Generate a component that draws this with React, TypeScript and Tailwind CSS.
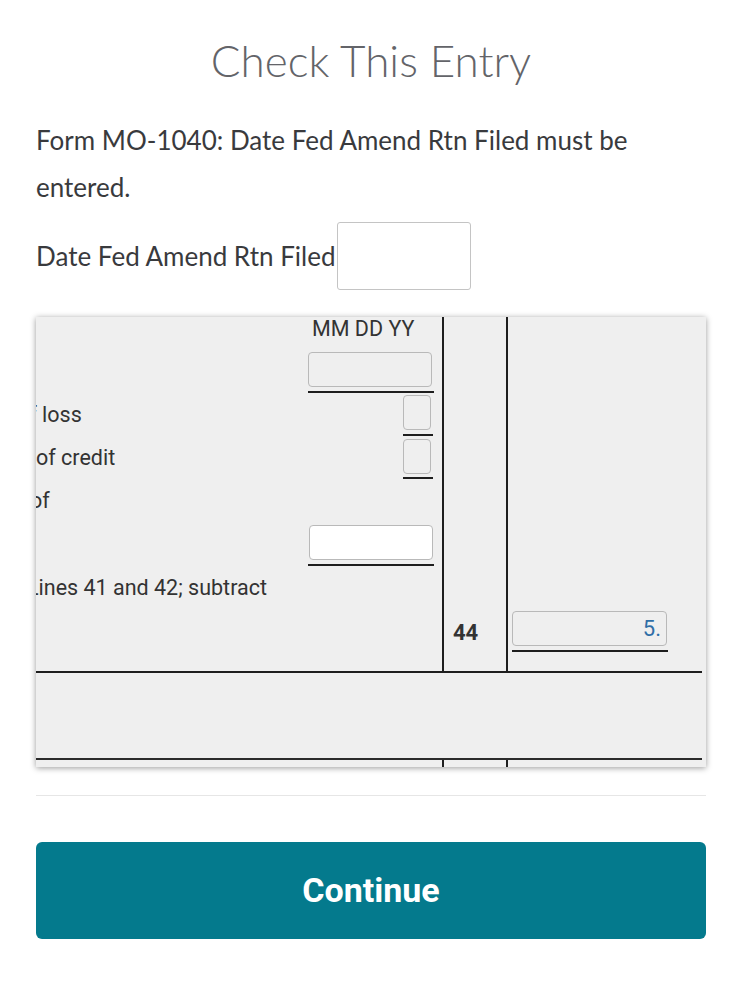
import React from "react";

const roboto = { fontFamily: "Roboto, 'Liberation Sans', sans-serif" };

function Line({ w = "w-full", ml = "ml-0" }: { w?: string; ml?: string }) {
  return <div className={`h-[2px] bg-[#1e1e1e] ${w} ${ml}`} />;
}

export default function App() {
  return (
    <div className="w-[732px] h-[999px] bg-white overflow-hidden" style={{ fontFamily: "Lato, 'Liberation Sans', sans-serif" }}>
      <div className="pl-[36px] pr-[26px]">
        <h1 className="pt-[34px] text-center text-[44px] leading-[53px] font-light text-[#636469]">
          Check This Entry
        </h1>
        <p className="mt-[30px] text-[26px] leading-[47px] text-[#393a3d]">
          Form MO-1040: Date Fed Amend Rtn Filed must be entered.
        </p>
        <div className="mt-[11px] flex items-center">
          <span className="text-[26px] leading-[31px] text-[#393a3d]">Date Fed Amend Rtn Filed</span>
          <div className="ml-[1px] w-[134px] h-[68px] border border-[#c4c4c4] rounded-[3px] bg-white" />
        </div>

        {/* form panel */}
        <div
          className="mt-[27px] h-[450px] bg-[#efefef] shadow-[0_1px_6px_rgba(0,0,0,0.4)] overflow-hidden text-[21.5px] text-[#333]"
          style={roboto}
        >
          <div className="mr-[4px]">
            <div className="flex h-[356px] border-b-2 border-[#1e1e1e]">
              {/* column A */}
              <div className="w-[406px] flex flex-col">
                <div className="flex h-[35px]">
                  <div className="w-[272px]" />
                  <div className="w-[126px] pl-[4px] leading-[24px]">MM DD YY</div>
                </div>
                <div className="flex h-[43px]">
                  <div className="w-[272px]" />
                  <div className="w-[126px] flex flex-col">
                    <div className="w-[124px] h-[35px] border border-[#b9b9b9] rounded-[4px] bg-[#efefef]" />
                    <div className="mt-[4px]"><Line /></div>
                  </div>
                </div>
                <div className="flex h-[44px]">
                  <div className="w-[272px] overflow-hidden pt-[8px] leading-[24px] whitespace-nowrap">
                    <span className="inline-block ml-[-19px]">of loss</span>
                  </div>
                  <div className="w-[126px] flex flex-col items-end">
                    <div className="mr-[3px] w-[28px] h-[35px] border border-[#b9b9b9] rounded-[4px] bg-[#efefef]" />
                    <div className="mt-[4px] mr-[1px] w-[30px]"><Line /></div>
                  </div>
                </div>
                <div className="flex h-[43px]">
                  <div className="w-[272px] overflow-hidden pt-[7px] leading-[24px] whitespace-nowrap">
                    <span className="inline-block ml-[0px]">of credit</span>
                  </div>
                  <div className="w-[126px] flex flex-col items-end">
                    <div className="mr-[3px] w-[28px] h-[35px] border border-[#b9b9b9] rounded-[4px] bg-[#efefef]" />
                    <div className="mt-[3px] mr-[1px] w-[30px]"><Line /></div>
                  </div>
                </div>
                <div className="flex h-[43px]">
                  <div className="w-[272px] overflow-hidden pt-[7px] leading-[24px] whitespace-nowrap">
                    <span className="inline-block ml-[-6px]">of</span>
                  </div>
                  <div className="w-[126px]" />
                </div>
                <div className="flex h-[45px]">
                  <div className="w-[272px]" />
                  <div className="w-[126px] flex flex-col">
                    <div className="ml-[1px] w-[124px] h-[35px] border border-[#b9b9b9] rounded-[4px] bg-white" />
                    <div className="mt-[4px]"><Line /></div>
                  </div>
                </div>
                <div className="flex">
                  <div className="w-[360px] overflow-hidden pt-[6px] leading-[24px] whitespace-nowrap">
                    <span className="inline-block ml-[-9px]">Lines 41 and 42; subtract</span>
                  </div>
                </div>
              </div>
              {/* column B */}
              <div className="w-[66px] border-l-2 border-r-2 border-[#1e1e1e] pt-[300px] pl-[9px]">
                <span className="text-[22px] leading-[26px] font-bold text-[#333]">44</span>
              </div>
              {/* column C */}
              <div className="flex-1 pt-[294px] pl-[4px]">
                <div className="w-[155px] h-[35px] border border-[#b9b9b9] rounded-[4px] bg-[#efefef] flex items-center justify-end pr-[5px] text-[22px] leading-[26px] text-[#2f6ea7]">
                  5.
                </div>
                <div className="mt-[4px] w-[156px]"><Line /></div>
              </div>
            </div>
            <div className="h-[85px]" />
            <div className="h-[2px] bg-[#2b2b2b]" />
            <div className="flex h-[7px]">
              <div className="w-[406px]" />
              <div className="w-[66px] border-l-2 border-r-2 border-[#1e1e1e]" />
            </div>
          </div>
        </div>

        <div className="mt-[28px] h-[1px] bg-[#e6e6e6]" />

        <button
          className="mt-[46px] w-full h-[97px] rounded-[6px] bg-[#047a8d] text-white text-[34px] font-bold"
          style={roboto}
        >
          Continue
        </button>
      </div>
    </div>
  );
}
